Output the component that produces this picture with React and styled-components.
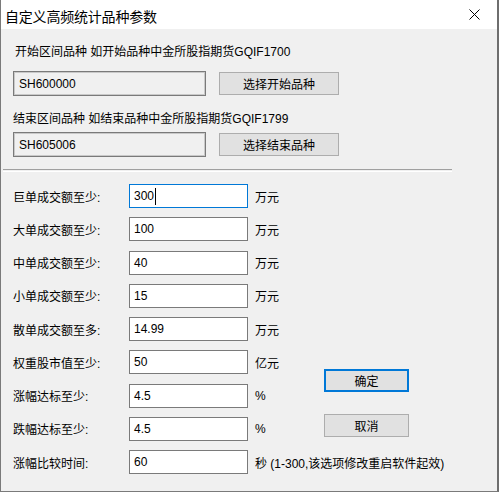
import React from 'react'
import styled, { createGlobalStyle } from 'styled-components'

const GlobalStyle = createGlobalStyle`
  html, body {
    margin: 0;
    padding: 0;
    background: #f0f0f0;
  }
  body {
    font-family: "Liberation Sans", "Noto Sans CJK SC", sans-serif;
    font-size: 12px;
    color: #000;
  }
`

const Window = styled.div`
  width: 499px;
  height: 492px;
  box-sizing: border-box;
  border: 1px solid #7a7a7a;
  border-top: none;
  border-right: 2px solid #6e6e6e;
  background: #f0f0f0;
  display: flex;
  flex-direction: column;
  overflow: hidden;
`

const TitleBar = styled.div`
  height: 29px;
  flex: 0 0 29px;
  background: #fff;
  display: flex;
  align-items: center;
  justify-content: space-between;
  padding: 2px 0 0 4px;
  box-sizing: border-box;
`

const Title = styled.span`
  font-size: 14px;
  letter-spacing: -0.2px;
`

const CloseBox = styled.div`
  width: 46px;
  height: 29px;
  margin-top: -2px;
  display: flex;
  align-items: center;
  justify-content: center;
`

const Body = styled.div`
  flex: 1;
  display: flex;
  flex-direction: column;
`

const Section = styled.div`
  padding: 15px 0 0 12px;
  display: flex;
  flex-direction: column;
`

const Caption = styled.div`
  line-height: 16px;
  height: 16px;
  white-space: nowrap;
  margin-top: ${p => p.$top || 0}px;
  margin-left: ${p => p.$indent || 0}px;
`

const PickRow = styled.div`
  display: flex;
  align-items: center;
  gap: 13px;
  height: 25px;
  margin-top: ${p => p.$top || 0}px;
`

const ReadBox = styled.div`
  width: 193px;
  height: 25px;
  box-sizing: border-box;
  border: 1px solid #7a7a7a;
  box-shadow: inset 0 0 0 1px #c9c9c9;
  background: #f0f0f0;
  padding: 0 0 0 5px;
  display: flex;
  align-items: center;
`

const Button = styled.div`
  width: ${p => p.$w}px;
  height: 23px;
  box-sizing: border-box;
  background: #e1e1e1;
  border: ${p => (p.$default ? '2px solid #0078d7' : '1px solid #adadad')};
  display: flex;
  align-items: center;
  justify-content: center;
  white-space: nowrap;
`

const Separator = styled.div`
  margin: 12px 45px 0 2px;
  height: 1px;
  border-top: 1px solid #a0a0a0;
  border-bottom: 1px solid #fff;
`

const Form = styled.div`
  margin: 12px 0 0 12px;
  display: grid;
  grid-template-columns: 116px 119px 76px 85px;
  grid-auto-rows: 24px;
  row-gap: 9.25px;
  align-items: center;
`

const Label = styled.div`
  white-space: nowrap;
  grid-column: 1;
`

const Field = styled.div`
  grid-column: 2;
  height: 24px;
  box-sizing: border-box;
  background: #fff;
  border: 1px solid ${p => (p.$focus ? '#0078d7' : '#7a7a7a')};
  padding-left: 4px;
  display: flex;
  align-items: center;
`

const Caret = styled.span`
  display: inline-block;
  width: 1px;
  height: 17px;
  background: #000;
  margin-left: 1px;
`

const Unit = styled.div`
  grid-column: ${p => (p.$wide ? '3 / span 2' : '3')};
  padding-left: 7px;
  white-space: nowrap;
`

const ButtonColumn = styled.div`
  grid-column: 4;
  grid-row: 6 / span 3;
  align-self: stretch;
  display: flex;
  flex-direction: column;
  gap: 22px;
  padding-top: 19px;
`

const rows = [
  { label: '巨单成交额至少:', value: '300', unit: '万元', focus: true },
  { label: '大单成交额至少:', value: '100', unit: '万元' },
  { label: '中单成交额至少:', value: '40', unit: '万元' },
  { label: '小单成交额至少:', value: '15', unit: '万元' },
  { label: '散单成交额至多:', value: '14.99', unit: '万元' },
  { label: '权重股市值至少:', value: '50', unit: '亿元' },
  { label: '涨幅达标至少:', value: '4.5', unit: '%' },
  { label: '跌幅达标至少:', value: '4.5', unit: '%' },
  { label: '涨幅比较时间:', value: '60', unit: '秒 (1-300,该选项修改重启软件起效)', wide: true },
]

const CloseIcon = () => (
  <svg width="11" height="11" viewBox="0 0 11 11">
    <path d="M0.5 0.5 L10.5 10.5 M10.5 0.5 L0.5 10.5" stroke="#000" strokeWidth="1" />
  </svg>
)

export default function App() {
  return (
    <>
      <GlobalStyle />
      <Window>
        <TitleBar>
          <Title>自定义高频统计品种参数</Title>
          <CloseBox><CloseIcon /></CloseBox>
        </TitleBar>
        <Body>
          <Section>
            <Caption $indent={2}>开始区间品种 如开始品种中金所股指期货GQIF1700</Caption>
            <PickRow $top={11}>
              <ReadBox>SH600000</ReadBox>
              <Button $w={120}>选择开始品种</Button>
            </PickRow>
            <Caption $top={15}>结束区间品种 如结束品种中金所股指期货GQIF1799</Caption>
            <PickRow $top={5}>
              <ReadBox>SH605006</ReadBox>
              <Button $w={120}>选择结束品种</Button>
            </PickRow>
          </Section>
          <Separator />
          <Form>
            {rows.map((r, i) => (
              <React.Fragment key={i}>
                <Label style={{ gridRow: i + 1 }}>{r.label}</Label>
                <Field $focus={r.focus} style={{ gridRow: i + 1 }}>
                  {r.value}
                  {r.focus && <Caret />}
                </Field>
                <Unit $wide={r.wide} style={{ gridRow: i + 1 }}>{r.unit}</Unit>
              </React.Fragment>
            ))}
            <ButtonColumn>
              <Button $w={85} $default>确定</Button>
              <Button $w={85}>取消</Button>
            </ButtonColumn>
          </Form>
        </Body>
      </Window>
    </>
  )
}
